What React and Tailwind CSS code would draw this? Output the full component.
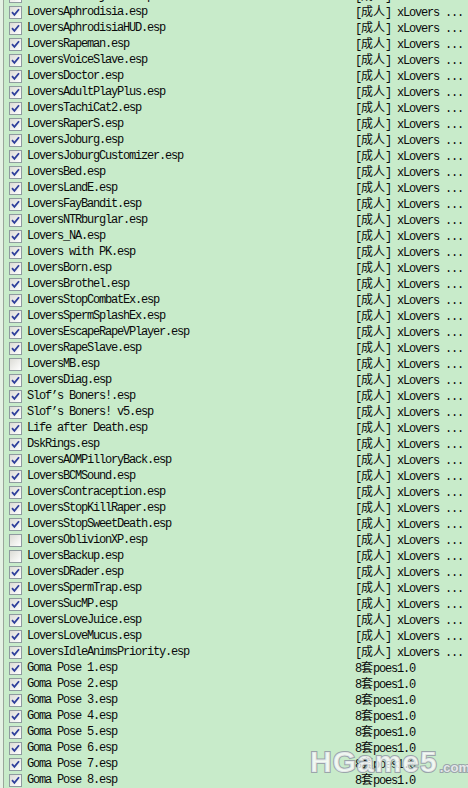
import React from 'react';

const adult = '[成人] xLovers ...';
const pose = '8套poes1.0';

const mods = [
  ['LoversAnimObjects.esp', adult, true],
  ['LoversAphrodisia.esp', adult, true],
  ['LoversAphrodisiaHUD.esp', adult, true],
  ['LoversRapeman.esp', adult, true],
  ['LoversVoiceSlave.esp', adult, true],
  ['LoversDoctor.esp', adult, true],
  ['LoversAdultPlayPlus.esp', adult, true],
  ['LoversTachiCat2.esp', adult, true],
  ['LoversRaperS.esp', adult, true],
  ['LoversJoburg.esp', adult, true],
  ['LoversJoburgCustomizer.esp', adult, true],
  ['LoversBed.esp', adult, true],
  ['LoversLandE.esp', adult, true],
  ['LoversFayBandit.esp', adult, true],
  ['LoversNTRburglar.esp', adult, true],
  ['Lovers_NA.esp', adult, true],
  ['Lovers with PK.esp', adult, true],
  ['LoversBorn.esp', adult, true],
  ['LoversBrothel.esp', adult, true],
  ['LoversStopCombatEx.esp', adult, true],
  ['LoversSpermSplashEx.esp', adult, true],
  ['LoversEscapeRapeVPlayer.esp', adult, true],
  ['LoversRapeSlave.esp', adult, true],
  ['LoversMB.esp', adult, false],
  ['LoversDiag.esp', adult, true],
  ['Slof’s Boners!.esp', adult, true],
  ['Slof’s Boners! v5.esp', adult, true],
  ['Life after Death.esp', adult, true],
  ['DskRings.esp', adult, true],
  ['LoversAOMPilloryBack.esp', adult, true],
  ['LoversBCMSound.esp', adult, true],
  ['LoversContraception.esp', adult, true],
  ['LoversStopKillRaper.esp', adult, true],
  ['LoversStopSweetDeath.esp', adult, true],
  ['LoversOblivionXP.esp', adult, false],
  ['LoversBackup.esp', adult, false],
  ['LoversDRader.esp', adult, true],
  ['LoversSpermTrap.esp', adult, true],
  ['LoversSucMP.esp', adult, true],
  ['LoversLoveJuice.esp', adult, true],
  ['LoversLoveMucus.esp', adult, true],
  ['LoversIdleAnimsPriority.esp', adult, true],
  ['Goma Pose 1.esp', pose, true],
  ['Goma Pose 2.esp', pose, true],
  ['Goma Pose 3.esp', pose, true],
  ['Goma Pose 4.esp', pose, true],
  ['Goma Pose 5.esp', pose, true],
  ['Goma Pose 6.esp', pose, true],
  ['Goma Pose 7.esp', pose, true],
  ['Goma Pose 8.esp', pose, true],
];

// split CJK out so it keeps full width while ascii is squeezed to 6px cells
function MixedText({ text }) {
  const parts = text.split(/([\u3400-\u9fff]+)/);
  return parts.map((p, i) =>
    /[\u3400-\u9fff]/.test(p) ? (
      <span key={i} className="font-['Noto_Sans_CJK_SC',sans-serif] text-[12px] tracking-normal">
        {p}
      </span>
    ) : (
      <span key={i}>{p}</span>
    )
  );
}

function CheckBox({ checked }) {
  return (
    <div className="w-[13px] h-[13px] shrink-0 border border-[#8f9a9f] bg-gradient-to-br from-[#dcdcd6] to-[#ffffff] flex items-center justify-center">
      {checked && (
        <svg width="9" height="9" viewBox="0 0 9 9">
          <path d="M1 4.2 L3.4 6.8 L8 1.2" fill="none" stroke="#2f3f9c" strokeWidth="1.8" />
        </svg>
      )}
    </div>
  );
}

export default function App() {
  return (
    <div className="relative w-[468px] h-[788px] overflow-hidden bg-[#c8ebca] flex">
      {/* left edge */}
      <div className="w-[3px] shrink-0 bg-[#e4f2e4]" />
      <div className="w-px shrink-0 bg-[#9aa69b]" />

      <div className="flex-1 flex flex-col mt-[-12px] font-['Liberation_Mono',monospace] text-[12px] tracking-[-1.2px] text-[#0a0a0a]">
        {mods.map(([name, desc, checked], i) => (
          <div key={i} className="h-4 flex items-center shrink-0 leading-4">
            <div className="ml-[5px] mr-[5px]">
              <CheckBox checked={checked} />
            </div>
            <div className="w-[328px] shrink-0 whitespace-pre">{name}</div>
            <div className="whitespace-pre">
              <MixedText text={desc} />
            </div>
          </div>
        ))}
      </div>

      {/* watermark */}
      <div className="absolute left-[310px] top-[747px] flex items-baseline font-['Liberation_Sans',sans-serif] font-bold text-white/75 [-webkit-text-stroke:2px_#9aa5aa] [paint-order:stroke_fill] pointer-events-none">
        <span className="text-[30px] leading-[30px] tracking-[1px]">HGame5</span>
        <span className="text-[13px] leading-[13px] ml-[2px]">.com</span>
      </div>
    </div>
  );
}
